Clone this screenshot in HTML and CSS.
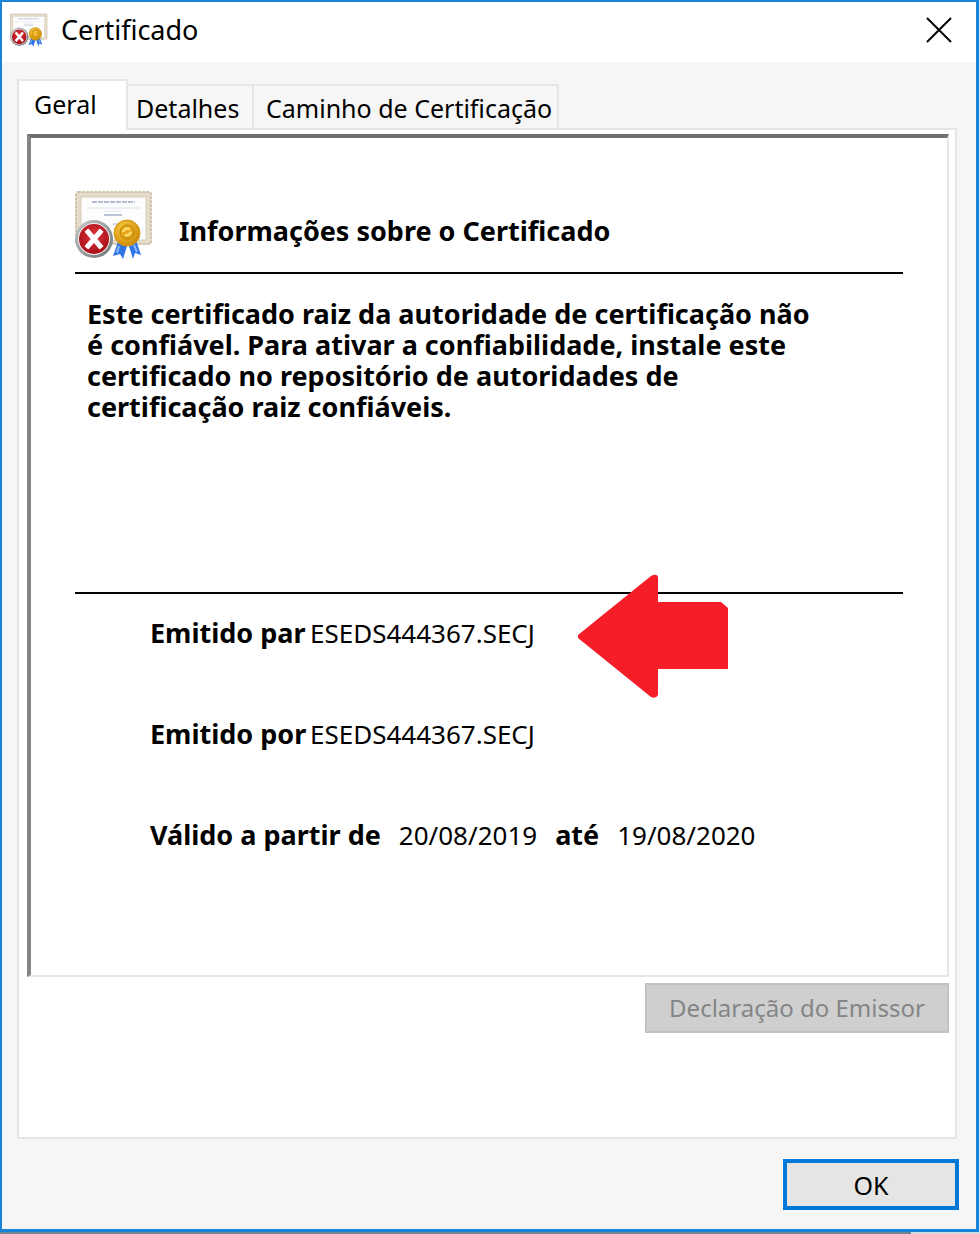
FILE: index.html
```
<!DOCTYPE html>
<html lang="pt-BR">

<head>
  <meta charset="UTF-8">
  <meta name="viewport" content="width=device-width, initial-scale=1.0">
  <title>Certificado</title>
  <link rel="stylesheet" href="styles.css">
</head>

<body>
  <svg width="0" height="0" class="defs" aria-hidden="true">
    <defs>
      <radialGradient id="red" cx="50%" cy="40%" r="60%">
        <stop offset="0" stop-color="#e0363c" />
        <stop offset="1" stop-color="#a80f18" />
      </radialGradient>
      <linearGradient id="ring" x1="0" y1="0" x2="1" y2="1">
        <stop offset="0" stop-color="#c4c8ca" />
        <stop offset="1" stop-color="#6f7577" />
      </linearGradient>
      <radialGradient id="gold" cx="40%" cy="35%" r="65%">
        <stop offset="0" stop-color="#fbd24a" />
        <stop offset="1" stop-color="#cf8a05" />
      </radialGradient>
      <symbol id="cert" viewBox="0 0 78 68">
        <rect x="1" y="1" width="75" height="52" rx="2" fill="#e6dccb" />
        <rect x="1" y="1" width="75" height="52" rx="2" fill="none" stroke="#cfc3ae" stroke-width="2" stroke-dasharray="3 1" />
        <rect x="6" y="6" width="65" height="43" fill="#fdfdfe" stroke="#d8cdb9" />
        <path d="M17 11H60" stroke="#b5bdd6" stroke-width="2" stroke-dasharray="5 1" />
        <path d="M11 17H65M30 20H46" stroke="#dfe2ec" />
        <path d="M29 24H47" stroke="#bcc4da" stroke-width="2" />
        <path d="M38 33H56" stroke="#d5daea" stroke-width="2" />
        <path d="M43 51L38 65L45 63L48 68L53 52Z" fill="#2f75e6" />
        <path d="M53 52L58 68L60 62L66 64L61 49Z" fill="#2f75e6" />
        <path d="M44 55L42 62M59 54L62 61" stroke="#8bb8fb" stroke-width="2" />
        <circle cx="52" cy="42" r="13" fill="url(#gold)" stroke="#d29a17" />
        <circle cx="52" cy="41" r="7" fill="#e6a817" stroke="#b97c06" />
        <path d="M48 41q2-5 7-3M50 44q4 1 6-3" fill="none" stroke="#ffe37d" stroke-width="2" />
        <circle cx="19" cy="48" r="19" fill="url(#ring)" />
        <circle cx="19" cy="48" r="16" fill="#f1eeee" />
        <circle cx="19" cy="48" r="15" fill="url(#red)" />
        <path d="M13 41L25 55M25 41L13 55" stroke="#fff" stroke-width="5" stroke-linecap="square" />
      </symbol>
    </defs>
  </svg>

  <div class="window">
    <header class="titlebar">
      <svg class="title-icon" aria-hidden="true"><use href="#cert" /></svg>
      <h1>Certificado</h1>
      <button class="close" type="button" aria-label="Fechar">
        <svg width="26" height="26" viewBox="0 0 26 26" aria-hidden="true">
          <path d="M1 1L25 25M25 1L1 25" stroke="#000" stroke-width="2" />
        </svg>
      </button>
    </header>

    <main class="content">
      <div class="tabs" role="tablist">
        <button class="tab active" type="button" role="tab" aria-selected="true">Geral</button>
        <button class="tab details" type="button" role="tab" aria-selected="false">Detalhes</button>
        <button class="tab path" type="button" role="tab" aria-selected="false">Caminho de Certificação</button>
      </div>

      <div class="panel" role="tabpanel">
        <section class="frame">
          <div class="heading">
            <svg class="cert-icon" aria-hidden="true"><use href="#cert" /></svg>
            <h2>Informações sobre o Certificado</h2>
          </div>

          <p class="message">
            Este certificado raiz da autoridade de certificação não<br>
            é confiável. Para ativar a confiabilidade, instale este<br>
            certificado no repositório de autoridades de<br>
            certificação raiz confiáveis.
          </p>

          <div class="info">
            <dl>
              <div class="row">
                <dt>Emitido par</dt>
                <dd>ESEDS444367.SECJ</dd>
              </div>
              <div class="row">
                <dt>Emitido por</dt>
                <dd>ESEDS444367.SECJ</dd>
              </div>
              <div class="row dates">
                <dt>Válido a partir de</dt>
                <dd>20/08/2019</dd>
                <dt>até</dt>
                <dd>19/08/2020</dd>
              </div>
            </dl>
            <svg class="arrow" viewBox="0 0 152 126" aria-hidden="true">
              <path d="M1 61L74 2Q80 -1 81 3V28H144L151 34V95H81V121Q79 125 74 123L1 64Z" fill="#f51d27" />
            </svg>
          </div>
        </section>

        <button class="issuer" type="button" disabled>Declaração do Emissor</button>
      </div>

      <footer class="actions">
        <button class="ok" type="button">OK</button>
      </footer>
    </main>
  </div>
</body>

</html>
```

FILE: styles.css
```
* {
  box-sizing: border-box;
}

body {
  margin: 0;
  background: linear-gradient(to right, #6f8296 93%, #d5dbe2 93%);
  color: #000;
  font-family: "Noto Sans", Tahoma, sans-serif;
  font-size: 27px;
  line-height: 32px;
}

h1,
h2,
p,
dl,
dd {
  margin: 0;
}

button {
  padding: 0;
  font: inherit;
  color: inherit;
}

.defs {
  position: absolute;
}

.window {
  margin-right: 1px;
  border: 2px solid #1883d7;
  border-right-width: 3px;
  border-bottom-width: 3px;
  background: #f6f6f6;
  box-shadow: 3px 0 #e2e8ee;
}

.titlebar {
  display: flex;
  align-items: center;
  height: 60px;
  padding: 0 24px 4px 8px;
  background: #fff;
}

.title-icon {
  width: 38px;
  height: 36px;
  margin-right: 13px;
}

h1 {
  flex: 1;
  font-size: 27px;
  font-weight: 400;
}

.close {
  display: flex;
  border: 0;
  background: none;
}

.content {
  padding: 17px 17px 19px 15px;
}

/* 选项卡 */
.tabs {
  display: flex;
  align-items: flex-end;
}

.tab {
  height: 44px;
  padding: 2px 0 0;
  border: 2px solid #e6e6e6;
  border-width: 2px 2px 0 0;
  background: #f6f6f6;
  font-size: 25px;
  text-align: left;
  white-space: nowrap;
}

.tab.active {
  position: relative;
  width: 111px;
  height: 51px;
  margin-bottom: -2px;
  padding: 0 15px 4px;
  border-left-width: 2px;
  background: #fff;
}

.details {
  width: 126px;
  padding-left: 8px;
}

.path {
  width: 305px;
  padding-left: 12px;
}

.panel {
  display: flex;
  flex-direction: column;
  margin-right: 2px;
  padding: 4px 6px 104px 8px;
  border: 2px solid #e6e6e6;
  background: #fff;
}

.frame {
  padding: 53px 44px 124px;
  border: 2px solid #e6e6e6;
  border-top: 4px solid #707070;
  border-left: 4px solid #858585;
}

.heading {
  display: flex;
  gap: 26px;
  padding-bottom: 13px;
  border-bottom: 2px solid #000;
}

.cert-icon {
  width: 78px;
  height: 68px;
}

h2 {
  padding-top: 24px;
  font-size: 27px;
  font-weight: 700;
}

.message {
  min-height: 318px;
  padding: 24px 12px;
  font-weight: 700;
  line-height: 31px;
}

.info {
  position: relative;
  padding: 23px 0 0 75px;
  border-top: 2px solid #000;
}

dl {
  display: flex;
  flex-direction: column;
  gap: 69px;
}

.row {
  display: flex;
}

dt {
  width: 160px;
  font-weight: 700;
  white-space: nowrap;
}

dd {
  font-size: 26px;
}

.dates {
  gap: 18px;
}

.dates dt {
  width: auto;
}

/* 箭头标注 */
.arrow {
  position: absolute;
  top: -20px;
  left: 502px;
  width: 152px;
  height: 126px;
}

.issuer {
  align-self: flex-end;
  width: 304px;
  height: 50px;
  margin-top: 6px;
  border: 2px solid #c2c2c2;
  background: #cfcfcf;
  color: #858585;
  font-size: 24px;
}

.actions {
  display: flex;
  justify-content: flex-end;
  padding-top: 20px;
}

.ok {
  width: 176px;
  height: 51px;
  border: 4px solid #0078d7;
  background: #e5e5e5;
  font-size: 25px;
}
```
